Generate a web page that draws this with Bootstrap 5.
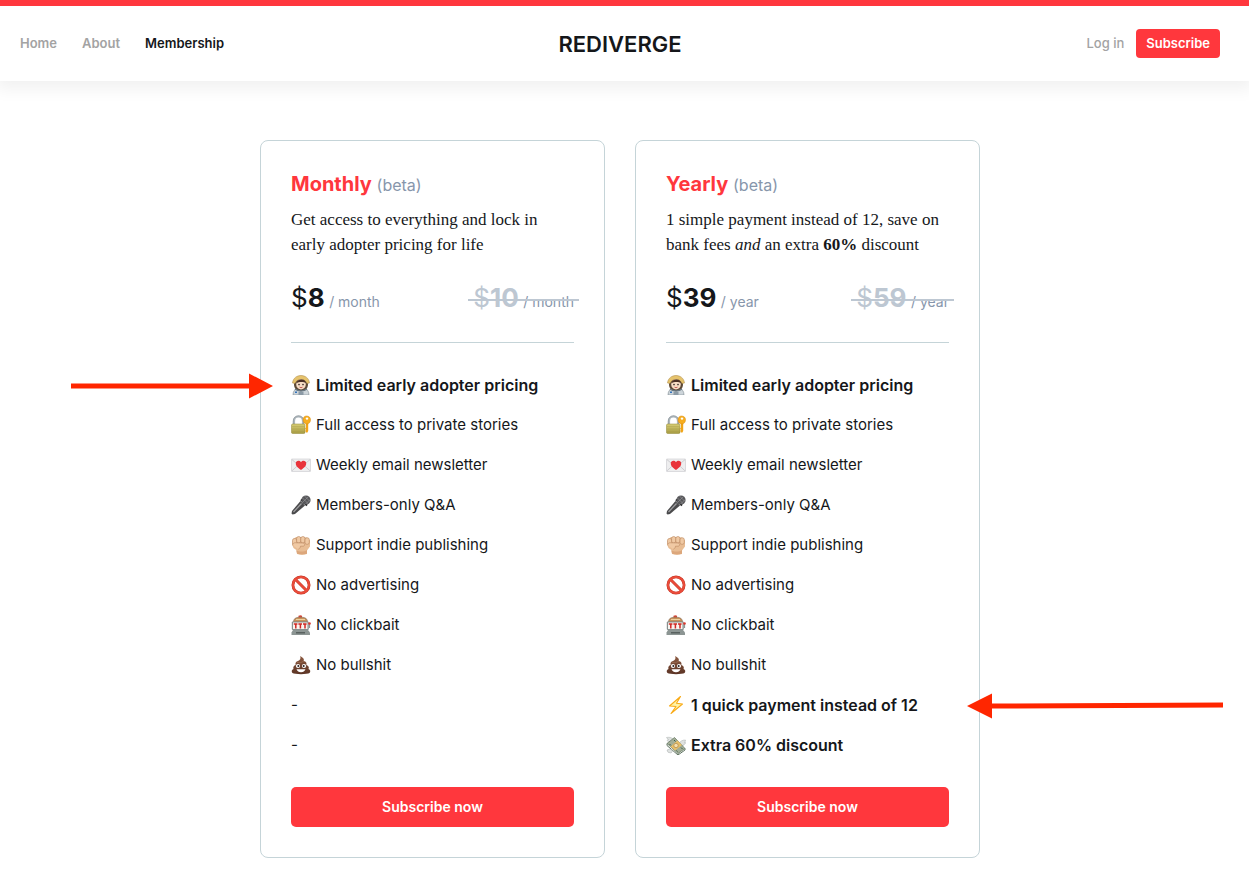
<!DOCTYPE html>
<html lang="en">
<head>
<meta charset="utf-8">
<meta name="viewport" content="width=device-width, initial-scale=1">
<title>Membership – Rediverge</title>
<link rel="stylesheet" href="https://cdn.jsdelivr.net/npm/bootstrap@5.3.0/dist/css/bootstrap.min.css">
<style>
  :root { --brand: #ff373d; --ink: #15171a; --slate: #8796ab; --line: #c5d4d8; --faded: #bdc7d2; }
  body { font-family: Inter, "Liberation Sans", sans-serif; color: var(--ink); font-size: 16px; }
  .site-header { border-top: 6px solid var(--brand); height: 81px; padding: 0 29px 0 20px; box-shadow: 0 4px 16px 4px rgba(0,0,0,.06); }
  .side { flex: 1 1 0; }
  .site-header a { font-size: 13px; font-weight: 600; line-height: 21px; color: #a3a3a3; text-decoration: none; }
  .site-header a.active { color: var(--ink); }
  .site-header a.login { font-weight: 500; }
  .site-header a.brand-name { font-size: 22px; font-weight: 600; color: var(--ink); line-height: 24px; }
  .links { gap: 25px; }
  .account { gap: 12px; }
  .btn-brand { --bs-btn-bg: var(--brand); --bs-btn-color: #fff; --bs-btn-hover-bg: #e92d33; --bs-btn-hover-color: #fff; --bs-btn-active-bg: #d9252b; --bs-btn-active-color: #fff; border: 0; font-weight: 600; }
  .btn-top { font-size: 13px; line-height: 19px; padding: 5px 10px; border-radius: 4px; }
  .plans-area { padding: 59px 29px 30px 20px; }
  .plans { max-width: 720px; gap: 30px; }
  .plan { flex: 1 1 0; border: 1px solid var(--line); border-radius: 8px; padding: 30px; }
  .plan h2 { font-size: 20px; line-height: 26px; font-weight: 700; color: var(--brand); margin: 0 0 9px; }
  .plan h2 span { font-size: 16px; font-weight: 400; color: var(--slate); }
  .blurb { font-family: "Liberation Serif", serif; font-size: 17px; line-height: 25px; margin: 0 0 23px; }
  .prices { line-height: 36px; padding-bottom: 22px; border-bottom: 1px solid var(--line); }
  .amount { font-size: 26px; font-weight: 700; }
  .amount i { font-style: normal; font-weight: 400; }
  .per { font-size: 14px; color: var(--slate); }
  .old { text-decoration: none; position: relative; }
  .old .amount { color: var(--faded); }
  .old::after { content: ""; position: absolute; left: -5px; right: -5px; top: 19px; height: 2px; background: var(--faded); }
  .perks { padding: 22px 0; margin: 0; font-size: 15px; }
  .perks li { height: 40px; gap: 5px; position: relative; white-space: nowrap; }
  .perks svg.emo { width: 20px; height: 20px; flex: none; }
  .perks .strong { font-size: 16px; font-weight: 600; }
  .pointer { position: absolute; height: 26px; top: 8px; }
  .pointer-in { right: calc(100% + 18px); width: 202px; }
  .pointer-out { left: calc(100% + 18px); width: 256px; }
  .btn-plan { font-size: 14px; line-height: 20px; padding: 10px; border-radius: 5px; }
</style>
</head>
<body>
<svg width="0" height="0" class="position-absolute" aria-hidden="true">
  <defs>
    <linearGradient id="gold" x2="0" y2="1"><stop stop-color="#d7cd75"/><stop offset="1" stop-color="#a79c42"/></linearGradient>
    <linearGradient id="poo" x2="0" y2="1"><stop stop-color="#8c5a41"/><stop offset="1" stop-color="#5c3425"/></linearGradient>
    <symbol id="e-astro" viewBox="0 0 20 20">
      <path d="M2 20c0-4 2-6 5-7h6c3 1 5 3 5 7z" fill="#cdd5da" stroke="#7d8990" stroke-width=".6"/>
      <path d="M3 9C3 4 6 1 10 1s7 3 7 8-3 7-7 7-7-2-7-7z" fill="#5d4a38"/>
      <path d="M1.500 8C2 3 6 .5 10 .5S18 3 18.500 8L16 8.500C15 6 13 4.500 10 4.500S5 6 4 8.500z" fill="#e6c36d" stroke="#a98543" stroke-width=".5"/>
      <ellipse cx="10" cy="9.500" rx="4.800" ry="5" fill="#f7dcc4"/>
      <path d="M5.200 8c1-3 3-3.500 5-3.500s4 .5 4.800 3.500c-2-1.500-7-1.500-9.800 0z" fill="#4b3025"/>
      <circle cx="8" cy="9.600" r=".8" fill="#30231f"/><circle cx="12" cy="9.600" r=".8" fill="#30231f"/>
      <path d="M8.500 12.200q1.500 1 3 0" stroke="#c4605a" fill="none"/>
      <path d="M4 14c3 2.500 9 2.500 12 0" stroke="#697883" stroke-width="1.500" fill="none"/>
      <rect x="7.500" y="17" width="5" height="3" fill="#8b9aa6"/><rect x="4" y="16.500" width="2" height="1.500" fill="#3674bb"/>
    </symbol>
    <symbol id="e-lock" viewBox="0 0 20 20">
      <path d="M3 10V6a4.500 4.500 0 0 1 9 0v4" fill="none" stroke="#aeb7bc" stroke-width="2.200"/>
      <path d="M2.200 10V6a5.300 5.300 0 0 1 10.600 0v4" fill="none" stroke="#7b858b" stroke-width=".5"/>
      <rect x=".5" y="9" width="13.500" height="9.500" rx="1.200" fill="url(#gold)" stroke="#918633" stroke-width=".5"/>
      <path d="M1 11.500h12.500M1 14h12.500M1 16.500h12.500" stroke="#a89d4a" stroke-width=".4"/>
      <path d="M14.800 7h2.400v9l-1.200 2-2-2 1-1-1-1.500 1-1z" fill="#f0a418"/>
      <path d="M15.500 1c2.500 0 4 1.500 4 3.800S18 9 16 9s-4-1.500-4-4 1.500-4 3.500-4z" fill="#f6ae21" stroke="#d88608" stroke-width=".5"/>
      <circle cx="16" cy="3.600" r="1.200" fill="#fff"/>
    </symbol>
    <symbol id="e-mail" viewBox="0 0 20 20">
      <rect x=".5" y="4" width="19" height="12.500" rx=".6" fill="#eeeeef" stroke="#cacacc" stroke-width=".6"/>
      <path d="M.8 4.500L10 12l9.200-7.500M.8 16l6.500-6M19.200 16l-6.500-6" fill="none" stroke="#c1c2c5" stroke-width=".7"/>
      <path d="M10 15C6 12 4.800 10.500 4.800 8.500c0-3 3.700-3.600 5.200-1.200 1.500-2.400 5.200-1.800 5.200 1.200 0 2-1.200 3.500-5.200 6.500z" fill="#e9343b"/>
    </symbol>
    <symbol id="e-mic" viewBox="0 0 20 20">
      <path d="M9.500 6l4.500 4.500L4 19 1.500 19.500.5 18.500 1 16z" fill="#4a4a4c"/>
      <path d="M10.500 8.500L2.500 17" stroke="#a0a0a2" stroke-width="1.200"/>
      <path d="M10 4.500l6 6" stroke="#222224" stroke-width="2"/>
      <circle cx="15" cy="5" r="4.600" fill="#57575a"/>
      <path d="M11.500 3l6 6M13.500 1l5.500 5.500M17.500 1.500l-6.300 6.300M19.200 4.500l-4.500 4.500" stroke="#99999c" stroke-width=".6"/>
    </symbol>
    <symbol id="e-fist" viewBox="0 0 20 20">
      <path d="M1 9.500L2 4.500 5 2l11 .5 3 3v6l-3 4v3.500q-5 1.500-10 0V15.500L2.500 13z" fill="#e8bd94"/>
      <path d="M5 15c3 2 8 2 11 0v3.800q-5 1.500-10 0z" fill="#dca77c"/>
      <g fill="#f0c9a3" stroke="#b88660" stroke-width=".6"><rect x="1.500" y="3.500" width="4.300" height="6" rx="1.900"/><rect x="5.600" y="1.500" width="4.200" height="6.500" rx="2"/><rect x="9.800" y="1.500" width="4.200" height="6.500" rx="2"/><rect x="14" y="2.800" width="4.300" height="6.500" rx="1.900"/>
      <path d="M2 10.500C1 8.500 3 7.500 5 7.800l7 .2c2.200.2 2.200 3.200 0 3.200H9.500c0 1.500-1 2.500-2.200 3"/></g>
    </symbol>
    <symbol id="e-no" viewBox="0 0 20 20">
      <circle cx="10" cy="10" r="8.100" fill="none" stroke="#c2321f" stroke-width="2.800"/><path d="M4.500 4.500l11 11" stroke="#c2321f" stroke-width="2.800"/>
      <circle cx="10" cy="10" r="8.100" fill="none" stroke="#ea4c3b" stroke-width="2"/><path d="M4.500 4.500l11 11" stroke="#ea4c3b" stroke-width="2"/>
    </symbol>
    <symbol id="e-slot" viewBox="0 0 20 20">
      <path d="M7.500 3V.8q2-1 3.500 0V3z" fill="#d84536"/>
      <path d="M2.500 7q0-4.500 5.500-4.800h3q5.500 .3 5.500 4.800z" fill="#c89159" stroke="#7d6450" stroke-width=".6"/>
      <path d="M5 4.500h9" stroke="#ecd0a0"/>
      <rect x=".8" y="6.500" width="17" height="8.500" rx="1" fill="#87908f"/>
      <rect x="2" y="7.500" width="14.500" height="6.500" fill="#f8f4ef"/>
      <path d="M2.800 9h3.600M4.800 9v4.500M7.400 9h3.600M9.400 9v4.500M12 9h3.600M14 9v4.500" fill="none" stroke="#cf2925" stroke-width="1.500"/>
      <path d="M2 15h15l2 2.500V20H.5v-2.500z" fill="#8c9593"/><path d="M5 17h9v1.500H5z" fill="#59615f"/>
      <path d="M18.500 13V9" stroke="#8f9694" stroke-width="1.200"/><circle cx="18.500" cy="8.500" r="1.300" fill="#da382d"/>
    </symbol>
    <symbol id="e-poo" viewBox="0 0 20 20">
      <path d="M9.200 1c2.800 1.500 4.300 3 3.500 5 2.500.5 3.300 2.200 2.600 4 2.500.5 3 2.500 2.200 4 2 .7 2.300 2.800 1 4-2 1.500-15 1.500-17 0-1.300-1.200-1-3.500 1-4-.7-1.800.3-3.500 2.200-4C4 8 5 6.500 7 6c2-.7 3-2 2.200-5z" fill="url(#poo)"/>
      <path d="M6 7.500q4 1 7-1.500" stroke="#a77a5e" fill="none" stroke-width=".6"/>
      <circle cx="7" cy="11" r="2.100" fill="#fff"/><circle cx="13" cy="11" r="2.100" fill="#fff"/><circle cx="7.300" cy="11" r="1" fill="#292222"/><circle cx="12.700" cy="11" r="1" fill="#292222"/>
      <path d="M5.500 14.300h9q-1.200 3-4.500 3t-4.500-3z" fill="#fff"/>
    </symbol>
    <symbol id="e-bolt" viewBox="0 0 20 20"><path d="M14.500 1.500L3.500 11l6.500.5L5 18.500 16.500 9l-6-.7z" fill="#fff3a5" stroke="#f9ab19" stroke-width="1.100" stroke-linejoin="round"/></symbol>
    <symbol id="e-cash" viewBox="0 0 20 20">
      <path d="M9 7C7 2 3 2 .5 2.500c.5 1 1 1.500 2 2-1 0-1.200.5-1.500 1 1 1 2 1 3 1-.5.500 0 2 4 1.500zM13 9c1-3 3.500-4 6.500-4 0 1-.5 2-1 2.500h1c0 1.500-1 2-2 2.200.5.800-1 1.800-3.500.8z" fill="#dfe2e1" stroke="#a9aead" stroke-width=".5"/>
      <path d="M8.500 2.500L19 13.500 12 18.500 1 8.500z" fill="#a3ae97" stroke="#5f725c" stroke-width=".7"/>
      <path d="M1 8.500v2L12 20v-1.500M12 20l7-5v-1.500" fill="none" stroke="#607461"/>
      <path d="M11.500 5.500l4.500 4.500-7 5.500L4.500 11.500z" fill="#e9bf68"/><circle cx="10" cy="10.500" r="2.200" fill="#f4e0b0" stroke="#a07b3e" stroke-width=".6"/>
      <path d="M8 5L9.500 6.500M15 12.500l1.500 1.500M3.500 9L5 10.500M11.500 16.500l-1-1" stroke="#3f5c48"/>
      <path d="M1 15q3-2 5 0 1 2-1 3-4 0-4-3z" fill="#dfe2e1" stroke="#a9aead" stroke-width=".5"/>
    </symbol>
  </defs>
</svg>

<header class="site-header d-flex align-items-center bg-white">
  <nav class="side links d-flex" aria-label="Main">
    <a href="#">Home</a><a href="#">About</a><a href="#" class="active" aria-current="page">Membership</a>
  </nav>
  <a href="#" class="brand-name">REDIVERGE</a>
  <div class="side account d-flex justify-content-end align-items-center">
    <a href="#" class="login">Log in</a>
    <button type="button" class="btn btn-brand btn-top">Subscribe</button>
  </div>
</header>

<main class="plans-area">
  <div class="plans d-flex mx-auto">
    <section class="plan">
      <h2>Monthly <span>(beta)</span></h2>
      <p class="blurb">Get access to everything and lock in early adopter pricing for life</p>
      <div class="prices d-flex justify-content-between">
        <div><span class="amount"><i>$</i>8</span> <span class="per">/ month</span></div>
        <s class="old"><span class="amount"><i>$</i>10</span> <span class="per">/ month</span></s>
      </div>
      <ul class="perks list-unstyled">
        <li class="strong d-flex align-items-center"><svg class="emo"><use href="#e-astro"/></svg>Limited early adopter pricing
          <svg class="pointer pointer-in" viewBox="0 0 202 26" aria-hidden="true"><path d="M0 10.500h178V.5L202 13l-24 12.500v-10H0z" fill="#ff2600"/></svg></li>
        <li class="d-flex align-items-center"><svg class="emo"><use href="#e-lock"/></svg>Full access to private stories</li>
        <li class="d-flex align-items-center"><svg class="emo"><use href="#e-mail"/></svg>Weekly email newsletter</li>
        <li class="d-flex align-items-center"><svg class="emo"><use href="#e-mic"/></svg>Members-only Q&amp;A</li>
        <li class="d-flex align-items-center"><svg class="emo"><use href="#e-fist"/></svg>Support indie publishing</li>
        <li class="d-flex align-items-center"><svg class="emo"><use href="#e-no"/></svg>No advertising</li>
        <li class="d-flex align-items-center"><svg class="emo"><use href="#e-slot"/></svg>No clickbait</li>
        <li class="d-flex align-items-center"><svg class="emo"><use href="#e-poo"/></svg>No bullshit</li>
        <li class="d-flex align-items-center">-</li>
        <li class="d-flex align-items-center">-</li>
      </ul>
      <button type="button" class="btn btn-brand btn-plan w-100">Subscribe now</button>
    </section>
    <section class="plan">
      <h2>Yearly <span>(beta)</span></h2>
      <p class="blurb">1 simple payment instead of 12, save on bank fees <em>and</em> an extra <b>60%</b> discount</p>
      <div class="prices d-flex justify-content-between">
        <div><span class="amount"><i>$</i>39</span> <span class="per">/ year</span></div>
        <s class="old"><span class="amount"><i>$</i>59</span> <span class="per">/ year</span></s>
      </div>
      <ul class="perks list-unstyled">
        <li class="strong d-flex align-items-center"><svg class="emo"><use href="#e-astro"/></svg>Limited early adopter pricing</li>
        <li class="d-flex align-items-center"><svg class="emo"><use href="#e-lock"/></svg>Full access to private stories</li>
        <li class="d-flex align-items-center"><svg class="emo"><use href="#e-mail"/></svg>Weekly email newsletter</li>
        <li class="d-flex align-items-center"><svg class="emo"><use href="#e-mic"/></svg>Members-only Q&amp;A</li>
        <li class="d-flex align-items-center"><svg class="emo"><use href="#e-fist"/></svg>Support indie publishing</li>
        <li class="d-flex align-items-center"><svg class="emo"><use href="#e-no"/></svg>No advertising</li>
        <li class="d-flex align-items-center"><svg class="emo"><use href="#e-slot"/></svg>No clickbait</li>
        <li class="d-flex align-items-center"><svg class="emo"><use href="#e-poo"/></svg>No bullshit</li>
        <li class="strong d-flex align-items-center"><svg class="emo"><use href="#e-bolt"/></svg>1 quick payment instead of 12
          <svg class="pointer pointer-out" viewBox="0 0 256 26" aria-hidden="true"><path d="M0 13L25 .5v10L256 9.500v5L25 15.500v10z" fill="#ff2600"/></svg></li>
        <li class="strong d-flex align-items-center"><svg class="emo"><use href="#e-cash"/></svg>Extra 60% discount</li>
      </ul>
      <button type="button" class="btn btn-brand btn-plan w-100">Subscribe now</button>
    </section>
  </div>
</main>
<script src="https://cdn.jsdelivr.net/npm/bootstrap@5.3.0/dist/js/bootstrap.bundle.min.js"></script>
</body>
</html>
